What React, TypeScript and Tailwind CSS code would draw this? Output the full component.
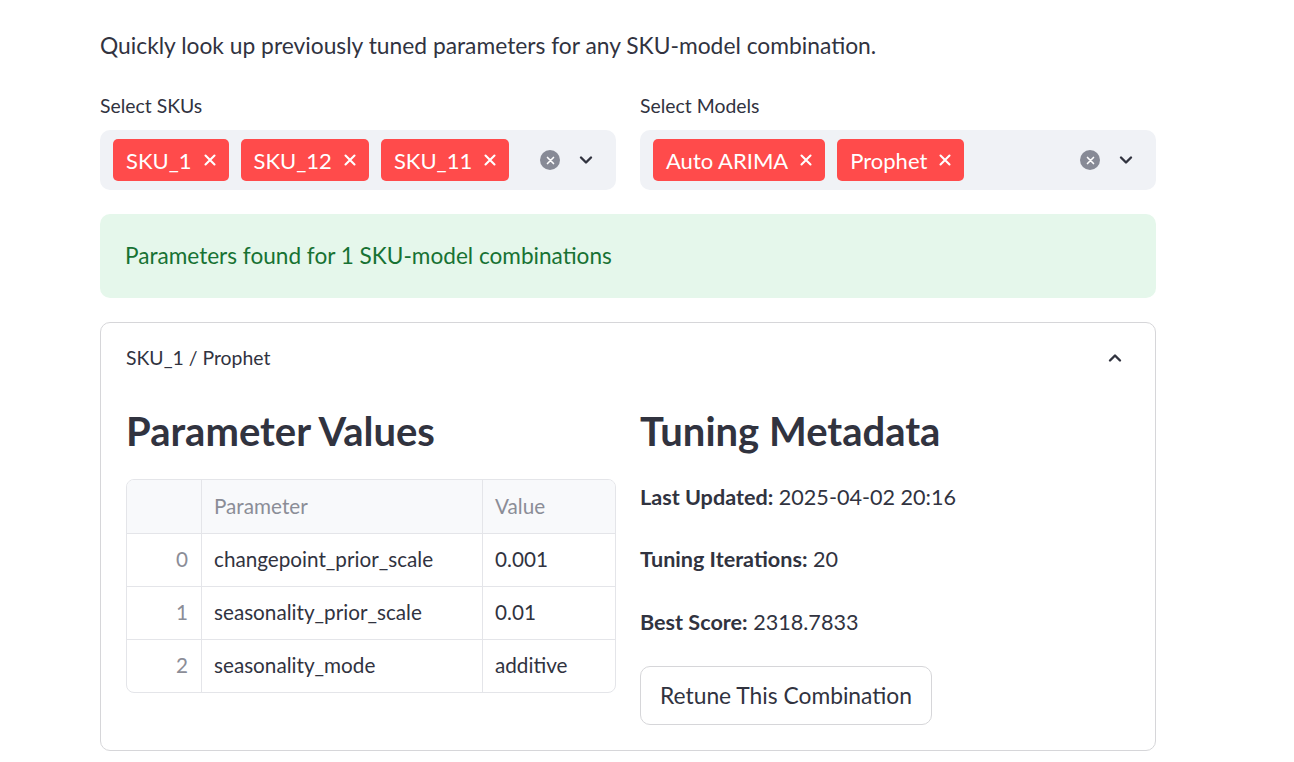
import React from "react";

const font = { fontFamily: "Lato, 'Noto Sans', sans-serif" };

const XIcon = ({ className = "" }: { className?: string }) => (
  <svg viewBox="0 0 12 12" className={className} fill="none" stroke="currentColor" strokeWidth="2.1" strokeLinecap="round">
    <path d="M1.5 1.5l9 9M10.5 1.5l-9 9" />
  </svg>
);

const Chevron = ({ up = false }: { up?: boolean }) => (
  <svg viewBox="0 0 16 16" className="w-[16px] h-[16px] text-[#31333f]" fill="none" stroke="currentColor" strokeWidth="2.4" strokeLinecap="round" strokeLinejoin="round">
    <path d={up ? "M3 10.5l5-5 5 5" : "M3 5.5l5 5 5-5"} />
  </svg>
);

const ClearIcon = () => (
  <div className="w-[20px] h-[20px] rounded-full bg-[#878a96] flex items-center justify-center text-white">
    <svg viewBox="0 0 12 12" className="w-[9px] h-[9px]" fill="none" stroke="currentColor" strokeWidth="2.2" strokeLinecap="round">
      <path d="M2 2l8 8M10 2l-8 8" />
    </svg>
  </div>
);

const Tag = ({ label }: { label: string }) => (
  <div className="h-[42px] flex items-center gap-[12px] pl-[13px] pr-[13px] rounded-[5px] bg-[#ff4b4b] text-white text-[22px]">
    <span>{label}</span>
    <XIcon className="w-[12px] h-[12px]" />
  </div>
);

const MultiSelect = ({ label, tags }: { label: string; tags: string[] }) => (
  <div className="flex-1 flex flex-col">
    <div className="h-[28px] leading-[28px] text-[19.4px] text-[#31333f]">{label}</div>
    <div className="mt-[10px] h-[60px] rounded-[10px] bg-[#f0f2f6] flex items-center pl-[13px] pr-[22px]">
      <div className="flex gap-[12px] flex-1">
        {tags.map((t) => (
          <Tag key={t} label={t} />
        ))}
      </div>
      <div className="flex items-center gap-[18px]">
        <ClearIcon />
        <Chevron />
      </div>
    </div>
  </div>
);

const rows = [
  ["0", "changepoint_prior_scale", "0.001"],
  ["1", "seasonality_prior_scale", "0.01"],
  ["2", "seasonality_mode", "additive"],
];

const ParamTable = () => (
  <div className="mt-[26px] border border-[#e4e5e9] rounded-[8px] overflow-hidden text-[20.7px]">
    <div className="grid grid-cols-[75px_281px_1fr] h-[53px] bg-[#f8f9fb] text-[#8b8d97]">
      <div className="border-r border-[#e4e5e9]" />
      <div className="border-r border-[#e4e5e9] flex items-center px-[12px]">Parameter</div>
      <div className="flex items-center px-[12px]">Value</div>
    </div>
    {rows.map(([i, p, v]) => (
      <div key={i} className="grid grid-cols-[75px_281px_1fr] h-[53px] border-t border-[#e4e5e9] text-[#31333f]">
        <div className="border-r border-[#e4e5e9] flex items-center justify-end px-[13px] text-[#8b8d97]">{i}</div>
        <div className="border-r border-[#e4e5e9] flex items-center px-[12px]">{p}</div>
        <div className="flex items-center px-[12px]">{v}</div>
      </div>
    ))}
  </div>
);

const Meta = ({ k, v, className = "" }: { k: string; v: string; className?: string }) => (
  <p className={`leading-[34px] text-[21.6px] text-[#31333f] ${className}`}>
    <span className="font-bold">{k}</span> {v}
  </p>
);

export default function App() {
  return (
    <div className="w-[1294px] h-[762px] bg-white overflow-hidden" style={font}>
      <div className="w-[1056px] ml-[100px] pt-[27px]">
        <p className="text-[22.8px] leading-[36px] text-[#31333f]">
          Quickly look up previously tuned parameters for any SKU-model combination.
        </p>

        <div className="mt-[29px] flex gap-[24px]">
          <MultiSelect label="Select SKUs" tags={["SKU_1", "SKU_12", "SKU_11"]} />
          <MultiSelect label="Select Models" tags={["Auto ARIMA", "Prophet"]} />
        </div>

        <div className="mt-[24px] h-[84px] rounded-[10px] bg-[#e5f7eb] flex items-center px-[25px] text-[22.6px] text-[#177233]">
          Parameters found for 1 SKU-model combinations
        </div>

        <div className="mt-[24px] h-[429px] border border-[#d6d6d9] rounded-[10px]">
          <div className="h-[70px] flex items-center justify-between pl-[25px] pr-[32px] text-[19.4px] text-[#31333f]">
            <span>SKU_1 / Prophet</span>
            <Chevron up />
          </div>
          <div className="flex gap-[24px] px-[25px] pt-[16px]">
            <div className="flex-1 flex flex-col">
              <h3 className="text-[40px] leading-[44px] font-bold text-[#31333f]">Parameter Values</h3>
              <ParamTable />
            </div>
            <div className="flex-1 flex flex-col items-start">
              <h3 className="text-[40px] leading-[44px] font-bold text-[#31333f]">Tuning Metadata</h3>
              <Meta className="mt-[27px]" k="Last Updated:" v="2025-04-02 20:16" />
              <Meta className="mt-[28px]" k="Tuning Iterations:" v="20" />
              <Meta className="mt-[29px]" k="Best Score:" v="2318.7833" />
              <button className="mt-[27px] h-[59px] px-[19px] border border-[#d6d6d9] rounded-[10px] bg-white text-[22.8px] text-[#31333f]">
                Retune This Combination
              </button>
            </div>
          </div>
        </div>
      </div>
    </div>
  );
}
